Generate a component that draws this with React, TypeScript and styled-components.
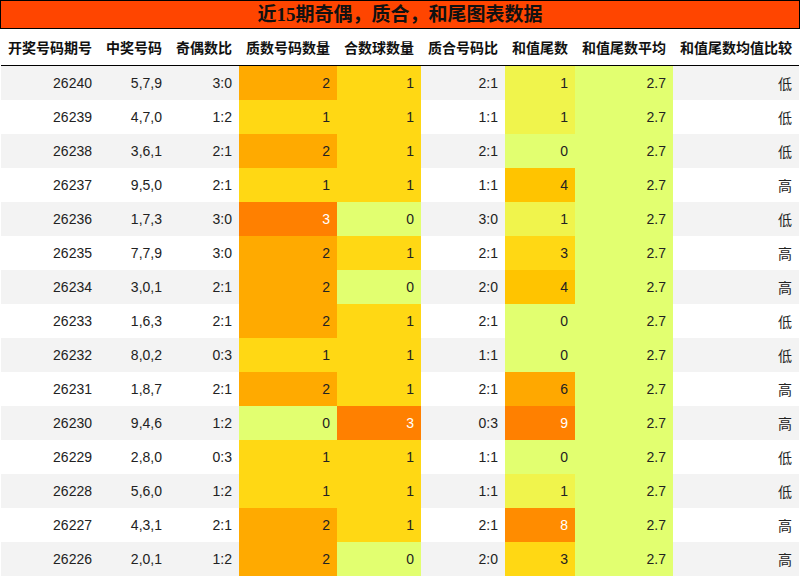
import React from "react";
import styled, { createGlobalStyle } from "styled-components";

const Global = createGlobalStyle`
  html, body { margin: 0; padding: 0; background: #fff; }
  body { font-family: "Liberation Sans", "Noto Sans CJK SC", sans-serif; }
`;

const Page = styled.div`
  width: 800px;
`;

const Title = styled.div`
  box-sizing: border-box;
  height: 29px;
  border: 1px solid #000;
  background: #ff4500;
  color: #111;
  text-align: center;
  font-family: "Liberation Serif", "Noto Sans CJK SC", serif;
  font-weight: bold;
  font-size: 19px;
  line-height: 27px;
`;

const Table = styled.table`
  margin-left: 1px;
  width: 798px;
  border-collapse: separate;
  border-spacing: 0;
  table-layout: fixed;
`;

const Th = styled.th<{ $w: number }>`
  width: ${(p) => p.$w}px;
  height: 36px;
  padding: 0;
  border-bottom: 1px solid #000;
  font-size: 14px;
  font-weight: bold;
  color: #111;
  text-align: center;
  white-space: nowrap;
`;

const Tr = styled.tr<{ $odd: boolean }>`
  background: ${(p) => (p.$odd ? "#f3f3f3" : "#ffffff")};
`;

const Td = styled.td<{ $bg?: string; $light?: boolean }>`
  height: 34px;
  padding: 0 7px 0 0;
  font-size: 14px;
  text-align: right;
  color: ${(p) => (p.$light ? "#ffffff" : "#222")};
  background: ${(p) => p.$bg || "transparent"};
  white-space: nowrap;
`;

const GREEN = "#e2ff70";
const countColor = ["#e2ff70", "#ffd814", "#ffaa00", "#ff8000"];
const tailColor: Record<number, string> = {
  0: "#e2ff70",
  1: "#f0f44c",
  2: "#ffe014",
  3: "#ffd814",
  4: "#ffc400",
  5: "#ffb800",
  6: "#ffa800",
  7: "#ff9800",
  8: "#ff8c00",
  9: "#ff8000",
};

type Row = [string, string, string, number, number, string, number, string, string];

const rows: Row[] = [
  ["26240", "5,7,9", "3:0", 2, 1, "2:1", 1, "2.7", "低"],
  ["26239", "4,7,0", "1:2", 1, 1, "1:1", 1, "2.7", "低"],
  ["26238", "3,6,1", "2:1", 2, 1, "2:1", 0, "2.7", "低"],
  ["26237", "9,5,0", "2:1", 1, 1, "1:1", 4, "2.7", "高"],
  ["26236", "1,7,3", "3:0", 3, 0, "3:0", 1, "2.7", "低"],
  ["26235", "7,7,9", "3:0", 2, 1, "2:1", 3, "2.7", "高"],
  ["26234", "3,0,1", "2:1", 2, 0, "2:0", 4, "2.7", "高"],
  ["26233", "1,6,3", "2:1", 2, 1, "2:1", 0, "2.7", "低"],
  ["26232", "8,0,2", "0:3", 1, 1, "1:1", 0, "2.7", "低"],
  ["26231", "1,8,7", "2:1", 2, 1, "2:1", 6, "2.7", "高"],
  ["26230", "9,4,6", "1:2", 0, 3, "0:3", 9, "2.7", "高"],
  ["26229", "2,8,0", "0:3", 1, 1, "1:1", 0, "2.7", "低"],
  ["26228", "5,6,0", "1:2", 1, 1, "1:1", 1, "2.7", "低"],
  ["26227", "4,3,1", "2:1", 2, 1, "2:1", 8, "2.7", "高"],
  ["26226", "2,0,1", "1:2", 2, 0, "2:0", 3, "2.7", "高"],
];

const headers: [string, number][] = [
  ["开奖号码期号", 98],
  ["中奖号码", 70],
  ["奇偶数比", 70],
  ["质数号码数量", 98],
  ["合数球数量", 84],
  ["质合号码比", 84],
  ["和值尾数", 70],
  ["和值尾数平均", 98],
  ["和值尾数均值比较", 126],
];

export default function App() {
  return (
    <Page>
      <Global />
      <Title>近15期奇偶，质合，和尾图表数据</Title>
      <Table>
        <thead>
          <tr>
            {headers.map(([h, w]) => (
              <Th key={h} $w={w}>
                {h}
              </Th>
            ))}
          </tr>
        </thead>
        <tbody>
          {rows.map((r, i) => (
            <Tr key={r[0]} $odd={i % 2 === 0}>
              <Td>{r[0]}</Td>
              <Td>{r[1]}</Td>
              <Td>{r[2]}</Td>
              <Td $bg={countColor[r[3]]} $light={r[3] >= 3}>
                {r[3]}
              </Td>
              <Td $bg={countColor[r[4]]} $light={r[4] >= 3}>
                {r[4]}
              </Td>
              <Td>{r[5]}</Td>
              <Td $bg={tailColor[r[6]]} $light={r[6] >= 8}>
                {r[6]}
              </Td>
              <Td $bg={GREEN}>{r[7]}</Td>
              <Td>{r[8]}</Td>
            </Tr>
          ))}
        </tbody>
      </Table>
    </Page>
  );
}
